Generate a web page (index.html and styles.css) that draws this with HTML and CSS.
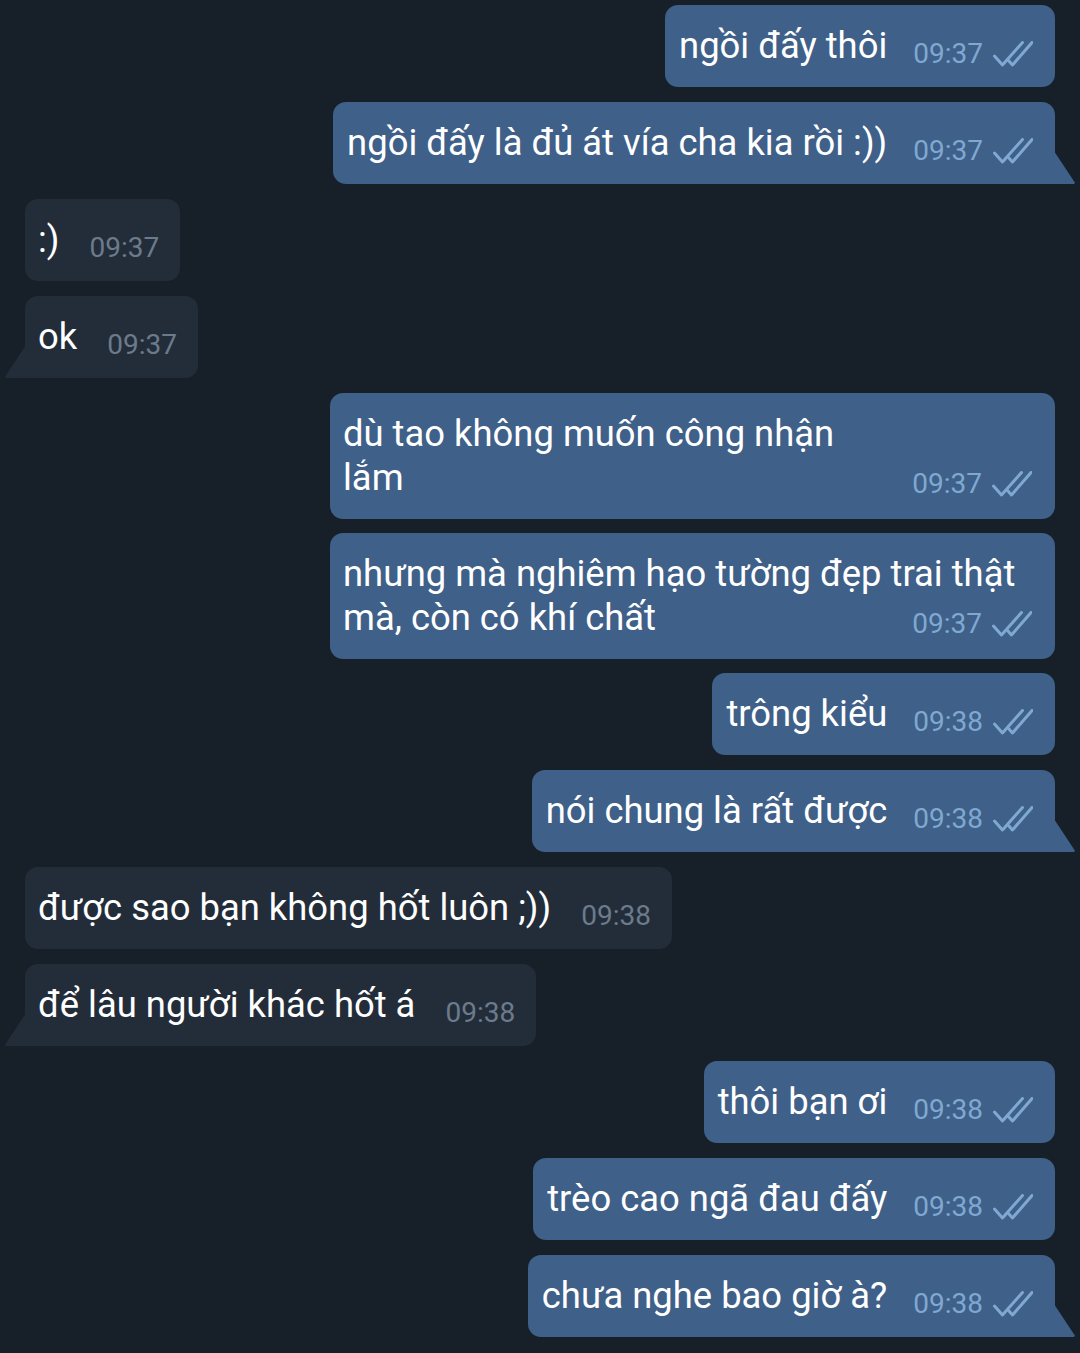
FILE: index.html
```html
<!DOCTYPE html>
<html lang="vi">
<head>
    <meta charset="UTF-8">
    <meta name="viewport" content="width=device-width, initial-scale=1.0">
    <title>Chat</title>
    <link rel="stylesheet" href="styles.css">
</head>
<body>
    <svg width="0" height="0" class="defs">
        <symbol id="ticks" viewBox="0 0 40 26">
            <path d="M1.5 15 L9.5 24 L29.5 1.5" />
            <path d="M15.5 19.5 L19.5 24 L39 1.5" />
        </symbol>
    </svg>

    <div class="chat">
        <div class="row out">
            <div class="bubble">ngồi đấy thôi<span class="meta">09:37<svg class="tick"><use href="#ticks"/></svg></span></div>
        </div>
        <div class="row out">
            <div class="bubble tail">ngồi đấy là đủ át vía cha kia rồi :))<span class="meta">09:37<svg class="tick"><use href="#ticks"/></svg></span></div>
        </div>

        <div class="row in">
            <div class="bubble">:)<span class="meta">09:37</span></div>
        </div>
        <div class="row in">
            <div class="bubble tail">ok<span class="meta">09:37</span></div>
        </div>

        <div class="row out">
            <div class="bubble wide">dù tao không muốn công nhận<br>lắm<span class="meta">09:37<svg class="tick"><use href="#ticks"/></svg></span></div>
        </div>
        <div class="row out">
            <div class="bubble wide">nhưng mà nghiêm hạo tường đẹp trai thật<br>mà, còn có khí chất<span class="meta">09:37<svg class="tick"><use href="#ticks"/></svg></span></div>
        </div>
        <div class="row out">
            <div class="bubble">trông kiểu<span class="meta">09:38<svg class="tick"><use href="#ticks"/></svg></span></div>
        </div>
        <div class="row out">
            <div class="bubble tail">nói chung là rất được<span class="meta">09:38<svg class="tick"><use href="#ticks"/></svg></span></div>
        </div>

        <div class="row in">
            <div class="bubble">được sao bạn không hốt luôn ;))<span class="meta">09:38</span></div>
        </div>
        <div class="row in">
            <div class="bubble tail">để lâu người khác hốt á<span class="meta">09:38</span></div>
        </div>

        <div class="row out">
            <div class="bubble">thôi bạn ơi<span class="meta">09:38<svg class="tick"><use href="#ticks"/></svg></span></div>
        </div>
        <div class="row out">
            <div class="bubble">trèo cao ngã đau đấy<span class="meta">09:38<svg class="tick"><use href="#ticks"/></svg></span></div>
        </div>
        <div class="row out">
            <div class="bubble tail">chưa nghe bao giờ à?<span class="meta">09:38<svg class="tick"><use href="#ticks"/></svg></span></div>
        </div>
    </div>
</body>
</html>
```

FILE: styles.css
```css
body {
    margin: 0;
    background-color: #171f29;
    font-family: Roboto, "Noto Sans", sans-serif;
    color: #ffffff;
}
.defs {
    position: absolute;
}
.chat {
    display: flex;
    flex-direction: column;
    gap: 15px;
    padding: 5px 25px 16px;
}
.row {
    display: flex;
}
.row.out {
    justify-content: flex-end;
}
.row.in {
    justify-content: flex-start;
}
.bubble {
    position: relative;
    font-size: 36.4px;
    line-height: 44px;
    padding: 19px 22px 19px 14px;
    border-radius: 13px;
    white-space: nowrap;
}
.out .bubble {
    background-color: #3f6088;
}
.in .bubble {
    background-color: #232d3a;
    padding: 19px 21px 19px 13px;
}
.bubble.wide {
    width: 689px;
    height: 88px;
    padding-left: 13px;
    padding-right: 23px;
}
.row:has(.wide) + .row {
    margin-top: -1px;
}
.meta {
    display: inline-flex;
    align-items: center;
    font-size: 28px;
    vertical-align: -5px;
    line-height: 28px;
}
.out .meta {
    color: #7fa8d2;
    margin-left: 26px;
}
.in .meta {
    color: #6b7b8b;
    margin-left: 30px;
}
.wide .meta {
    float: right;
    margin-top: 14px;
}
.tick {
    width: 40px;
    height: 26px;
    margin-left: 10px;
    fill: none;
    stroke: #7fa8d2;
    stroke-width: 3;
    stroke-linecap: round;
    stroke-linejoin: round;
}

/* tails */
.out .bubble.tail {
    border-bottom-right-radius: 0;
}
.in .bubble.tail {
    border-bottom-left-radius: 0;
}
.bubble.tail::after {
    content: "";
    position: absolute;
    bottom: 0;
    width: 21px;
    height: 33px;
    background-color: inherit;
}
.out .bubble.tail::after {
    right: -20px;
    clip-path: polygon(0 0, 100% 96%, 95% 100%, 0 100%);
}
.in .bubble.tail::after {
    left: -20px;
    clip-path: polygon(100% 0, 0 96%, 5% 100%, 100% 100%);
}
```
